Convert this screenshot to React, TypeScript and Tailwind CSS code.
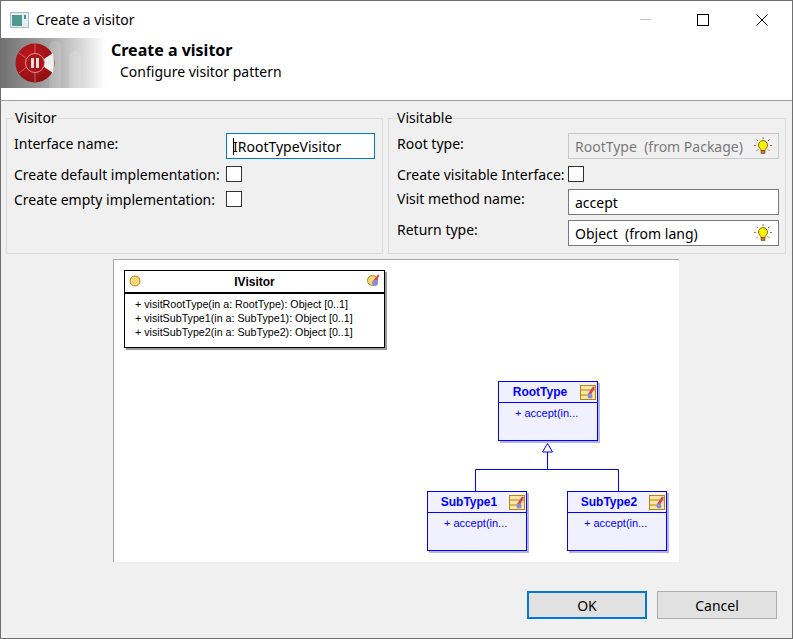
import React from 'react';

const Bulb = () => (
  <svg width="18" height="18" viewBox="0 0 18 18" className="shrink-0">
    <g stroke="#c9602a" strokeWidth="1" fill="none">
      <path d="M9 0v2M2.500 2.500l1.500 1.500M15.500 2.500L14 4M0 8.500h2M16 8.500h2M2.500 14l1.500-1.500M15.500 14l-1.500-1.500" />
    </g>
    <path d="M9 3.500a4.600 4.600 0 0 0-3 8c0.800 0.700 1 1.300 1 2h4c0-0.700 0.200-1.300 1-2a4.600 4.600 0 0 0-3-8z" fill="#fff200" stroke="#8a6a10" strokeWidth="1" />
    <rect x="7" y="13.500" width="4" height="3" fill="#c9702a" stroke="#7a4a10" strokeWidth="0.600" />
  </svg>
);

const Logo = () => (
  <svg width="105" height="50" viewBox="0 0 105 50" className="shrink-0">
    <defs>
      <linearGradient id="fade" x1="0" x2="1" y1="0" y2="0">
        <stop offset="0" stopColor="#727272" />
        <stop offset="0.45" stopColor="#a4a4a4" />
        <stop offset="1" stopColor="#ffffff" />
      </linearGradient>
      <radialGradient id="ball" cx="0.4" cy="0.35" r="0.75">
        <stop offset="0" stopColor="#c4161c" />
        <stop offset="1" stopColor="#8a0f12" />
      </radialGradient>
    </defs>
    <rect width="105" height="50" fill="url(#fade)" />
    <rect x="48" y="3" width="12" height="50" rx="6" fill="#ffffff" opacity="0.14" />
    <rect x="68" y="13" width="12" height="40" rx="6" fill="#ffffff" opacity="0.14" />
    <circle cx="34" cy="25" r="19.500" fill="url(#ball)" />
    <path d="M34 6v10M34 34v10M18 15l8 6M18 35l8-6" stroke="#d87070" strokeWidth="0.800" />
    <path d="M43 21l9-6q2 10 0 20l-9-6z" fill="#efefef" />
    <circle cx="34" cy="25" r="9.500" fill="#a81418" stroke="#d89a9a" strokeWidth="1" />
    <rect x="30" y="20" width="3" height="10" fill="#f0dcdc" />
    <rect x="35" y="20" width="3" height="10" fill="#f0dcdc" />
  </svg>
);

const ClassIcon = () => (
  <svg width="16" height="15" viewBox="0 0 16 15" className="ml-px">
    <rect x="0.500" y="0.500" width="15" height="14" fill="#f6e6a8" stroke="#b8860b" />
    <path d="M1 5h14M1 10h8" stroke="#b8860b" />
    <path d="M8 9l5-7.500 2 1-4 7z" fill="#d8405a" />
    <circle cx="10" cy="11" r="2.500" fill="#8a90d8" />
  </svg>
);

const InterfaceIcon = () => (
  <svg width="13" height="13" viewBox="0 0 13 13">
    <circle cx="5.500" cy="6.500" r="5" fill="#f6d878" stroke="#b8860b" />
    <path d="M6 7l5-6.500 1.500 1-3.500 6z" fill="#d8405a" />
    <circle cx="8" cy="9" r="3" fill="#8a90d8" />
  </svg>
);

const Box = ({ name, className }: { name: string; className: string }) => (
  <div className={`absolute w-[100px] h-[60px] border border-[#0000ff] bg-[#f0f0ff] shadow-[2px_2px_0_#b4b4dc] text-[#0000ff] ${className}`}>
    <div className="flex items-center h-[21px] border-b border-[#0000ff]">
      <span className="w-[80px] pl-[2px] text-center font-bold text-[12px] leading-none">{name}</span>
      <ClassIcon />
    </div>
    <div className="text-[11px] leading-none pt-[5px] pl-[16px]">+ accept(in...</div>
  </div>
);

const Row = ({ label, labelClass, children, className }: { label: string; labelClass: string; children: React.ReactNode; className: string }) => (
  <div className={`flex items-start ${className}`}>
    <span className={`shrink-0 leading-[20px] whitespace-nowrap ${labelClass}`}>{label}</span>
    {children}
  </div>
);

const Check = () => <div className="w-[16px] h-[16px] border border-[#333] bg-white" />;

export default function App() {
  return (
    <div className="w-[793px] h-[639px] border border-[#707070] bg-[#f0f0f0] text-[14px] text-black flex flex-col overflow-hidden font-['Noto_Sans',sans-serif]">
      {/* Title bar */}
      <div className="h-[37px] shrink-0 bg-white flex items-center">
        <svg width="19" height="16" viewBox="0 0 19 16" className="ml-[9px] mr-[7px] mt-[1px]">
          <rect x="0.500" y="0.500" width="18" height="15" fill="#e8edf0" stroke="#b0b8c0" />
          <rect x="2" y="3" width="10" height="11" fill="#4f9a90" />
          <rect x="14" y="3" width="2" height="4" fill="#4090c0" />
        </svg>
        <span>Create a visitor</span>
        <div className="ml-auto flex items-center mr-[24px]">
          <div className="w-[11px] h-px bg-[#c4c4c4] mr-[46px]" />
          <div className="w-[12px] h-[12px] border border-black mr-[47px]" />
          <svg width="12" height="12" viewBox="0 0 12 12">
            <path d="M0.500 0.500l11 11M11.500 0.500l-11 11" stroke="#000" strokeWidth="1" />
          </svg>
        </div>
      </div>

      {/* Banner */}
      <div className="h-[63px] shrink-0 bg-white border-b border-[#a0a0a0]">
        <div className="flex items-start h-[50px]">
          <Logo />
          <div className="ml-[5px]">
            <div className="font-bold text-[16px] leading-[24px]">Create a visitor</div>
            <div className="ml-[9px] leading-[20px]">Configure visitor pattern</div>
          </div>
        </div>
      </div>

      {/* Groups */}
      <div className="flex gap-[5px] ml-[5px] mt-[7px]">
        <fieldset className="w-[377px] h-[146px] border border-[#dcdcdc] pl-[7px] block">
          <legend className="px-px leading-[20px]">Visitor</legend>
          <Row label="Interface name:" labelClass="w-[212px] pt-px" className="mt-[5px]">
            <div className="w-[149px] h-[26px] border border-[#0078d7] bg-white pl-[6px] flex items-center">
              <span className="w-px h-[17px] bg-black -mr-px" />
              <span>IRootTypeVisitor</span>
            </div>
          </Row>
          <Row label="Create default implementation:" labelClass="w-[212px] -mt-px" className="mt-[7px]">
            <Check />
          </Row>
          <Row label="Create empty implementation:" labelClass="w-[212px] -mt-px" className="mt-[6px]">
            <Check />
          </Row>
        </fieldset>

        <fieldset className="w-[398px] h-[146px] border border-[#dcdcdc] pl-[8px] block">
          <legend className="leading-[20px]">Visitable</legend>
          <Row label="Root type:" labelClass="w-[171px] pt-px" className="mt-[5px]">
            <div className="w-[211px] h-[26px] border border-[#c8c8c8] bg-[#f0f0f0] flex items-center justify-between px-[6px] text-[#7a7a7a]">
              <span>RootType&nbsp; (from Package)</span>
              <Bulb />
            </div>
          </Row>
          <Row label="Create visitable Interface:" labelClass="w-[171px] -mt-px" className="mt-[7px]">
            <Check />
          </Row>
          <Row label="Visit method name:" labelClass="w-[171px]" className="mt-[4px]">
            <div className="w-[211px] h-[26px] border border-[#7a7a7a] bg-white px-[6px] flex items-center">accept</div>
          </Row>
          <Row label="Return type:" labelClass="w-[171px]" className="mt-[5px]">
            <div className="w-[211px] h-[26px] border border-[#7a7a7a] bg-white flex items-center justify-between px-[6px]">
              <span>Object&nbsp; (from lang)</span>
              <Bulb />
            </div>
          </Row>
        </fieldset>
      </div>

      {/* Diagram */}
      <div className="relative ml-[112px] mt-[5px] w-[566px] h-[303px] bg-white border-l border-t border-[#a8a8a8] font-['Liberation_Sans',sans-serif] shrink-0">
        <div className="absolute left-[10px] top-[10px] w-[261px] h-[78px] border border-black bg-white shadow-[2px_2px_0_#999]">
          <div className="relative flex items-center justify-center h-[23px] border-b-2 border-black font-bold text-[12px]">
            IVisitor
            <svg width="12" height="12" viewBox="0 0 12 12" className="absolute left-[4px] top-[4px]">
              <circle cx="6" cy="6" r="5" fill="#f6d878" stroke="#b8860b" />
            </svg>
            <span className="absolute right-[4px] top-[3px]"><InterfaceIcon /></span>
          </div>
          <div className="pt-[3px] pl-[10px] text-[10.700px] leading-[14px]">
            <div>+ visitRootType(in a: RootType): Object [0..1]</div>
            <div>+ visitSubType1(in a: SubType1): Object [0..1]</div>
            <div>+ visitSubType2(in a: SubType2): Object [0..1]</div>
          </div>
        </div>

        <Box name="RootType" className="left-[384px] top-[121px]" />
        <Box name="SubType1" className="left-[313px] top-[231px]" />
        <Box name="SubType2" className="left-[453px] top-[231px]" />

        <svg width="170" height="50" viewBox="0 0 170 50" className="absolute left-[352px] top-[183px]">
          <path d="M81.500 0.500l-5 8.500h10z" fill="#fff" stroke="#0000ff" strokeWidth="1" />
          <path d="M81.500 9v17.500M9.500 48v-21.500h143v21.500" fill="none" stroke="#0000ff" strokeWidth="1" />
        </svg>
      </div>

      {/* Buttons */}
      <div className="flex justify-end gap-[10px] mr-[15px] mt-[29px]">
        <button className="w-[120px] h-[28px] border-2 border-[#0078d7] bg-[#e1e1e1]">OK</button>
        <button className="w-[120px] h-[28px] border border-[#adadad] bg-[#e1e1e1]">Cancel</button>
      </div>
    </div>
  );
}
